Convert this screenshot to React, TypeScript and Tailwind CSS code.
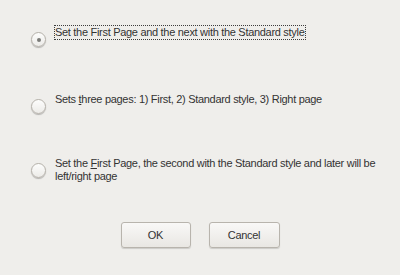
import React from "react";

function Radio({ checked }: { checked?: boolean }) {
  return (
    <div className="mt-[6px] flex h-[15px] w-[15px] shrink-0 items-center justify-center rounded-full border border-[#b5b1aa] bg-gradient-to-b from-[#fdfdfc] to-[#ecebe8] shadow-[0_1px_1px_rgba(0,0,0,0.25)]">
      {checked && <div className="h-[4px] w-[4px] rounded-full bg-[#7b7b78]" />}
    </div>
  );
}

export default function App() {
  return (
    <div
      className="flex h-[275px] w-[400px] flex-col bg-[#efeeeb] text-[11px] leading-[13px] tracking-[-0.3px] text-[#333333]"
      style={{ fontFamily: '"Liberation Sans", Arial, sans-serif' }}
    >
      <div className="ml-[31px] mt-[26px] flex items-start gap-[9px]">
        <Radio checked />
        <span className="outline outline-1 outline-dotted outline-[#3c3c3c] outline-offset-0">
          Set the First Page and the next with the Standard style
        </span>
      </div>
      <div className="ml-[31px] mt-[46px] flex items-start gap-[9px]">
        <Radio />
        <span>
          Sets <u>t</u>hree pages: 1) First, 2) Standard style, 3) Right page
        </span>
      </div>
      <div className="ml-[31px] mt-[43px] flex items-start gap-[9px]">
        <Radio />
        <span className="w-[330px]">
          Set the <u>F</u>irst Page, the second with the Standard style and later will be left/right page
        </span>
      </div>
      <div className="mt-[39px] flex justify-center gap-[18px]">
        <button className="h-[26px] w-[70px] rounded-[3px] border border-[#b8b4ad] bg-gradient-to-b from-[#f9f8f7] to-[#e9e7e3] text-[11px] text-[#333333] shadow-[0_1px_1px_rgba(0,0,0,0.15)]">
          OK
        </button>
        <button className="h-[26px] w-[71px] rounded-[3px] border border-[#b8b4ad] bg-gradient-to-b from-[#f9f8f7] to-[#e9e7e3] text-[11px] text-[#333333] shadow-[0_1px_1px_rgba(0,0,0,0.15)]">
          Cancel
        </button>
      </div>
    </div>
  );
}
